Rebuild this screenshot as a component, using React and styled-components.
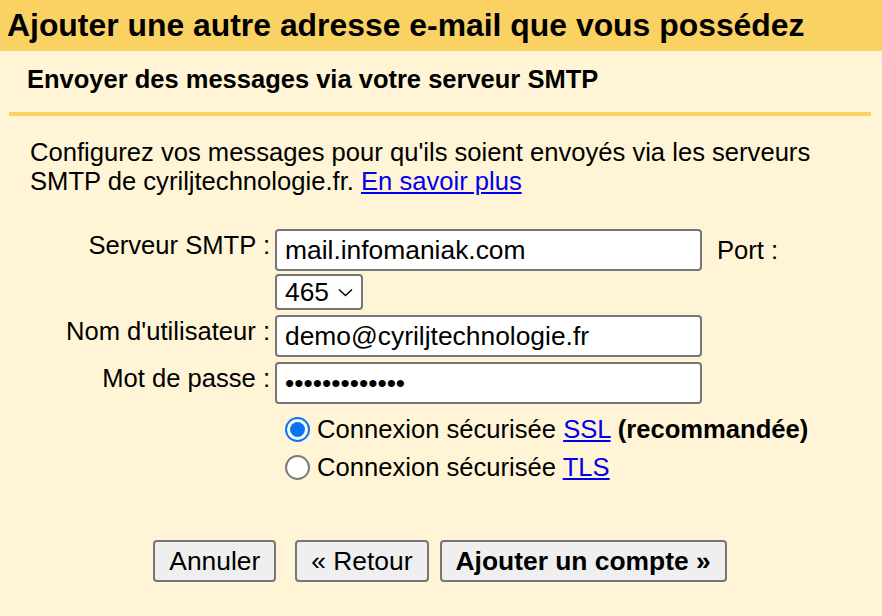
import React from 'react';
import styled, { createGlobalStyle } from 'styled-components';

const GlobalStyle = createGlobalStyle`
  html, body {
    margin: 0;
    padding: 0;
    background: #fff5d6;
  }
  body {
    font-family: "Liberation Sans", Arial, sans-serif;
    color: #000;
  }
`

const Page = styled.div`
  width: 882px;
  height: 616px;
  overflow: hidden;
  background: #fff5d6;
`

const Header = styled.h1`
  margin: 0;
  height: 51px;
  display: flex;
  align-items: center;
  padding-left: 7px;
  background: #fad163;
  font-size: 31.9px;
  font-weight: bold;
  white-space: nowrap;
`

const SubTitle = styled.h2`
  margin: 0;
  padding: 14px 0 0 27px;
  box-sizing: border-box;
  height: 61px;
  font-size: 25.5px;
  font-weight: bold;
  white-space: nowrap;
`

const Divider = styled.div`
  height: 4px;
  margin: 0 11px 0 9px;
  background: #fad163;
`

const Intro = styled.p`
  margin: 22px 0 0 30px;
  font-size: 25.6px;
  line-height: 29px;
`

const Link = styled.a`
  color: #0000ee;
  text-decoration: underline;
  cursor: pointer;
`

const FormGrid = styled.div`
  display: grid;
  grid-template-columns: 270px auto;
  column-gap: 5px;
  row-gap: 5px;
  margin-top: 33px;
`

const Label = styled.label`
  text-align: right;
  font-size: 25.6px;
  line-height: 29px;
  padding-top: 2px;
  white-space: nowrap;
`

const FieldCell = styled.div`
  display: flex;
  flex-direction: column;
  align-items: flex-start;
  gap: 3px;
`

const FieldRow = styled.div`
  display: flex;
  align-items: center;
  gap: 15px;
`

const TextInput = styled.input`
  box-sizing: border-box;
  width: 427px;
  height: 42px;
  padding: 0 8px;
  border: 2px solid #767676;
  border-radius: 4px;
  background: #fff;
  font-family: "Liberation Sans", Arial, sans-serif;
  font-size: 26.4px;
  color: #000;
  outline: none;
`

const PortLabel = styled.span`
  font-size: 25.6px;
`

const SelectBox = styled.div`
  box-sizing: border-box;
  width: 88px;
  height: 36px;
  display: flex;
  align-items: center;
  justify-content: space-between;
  padding: 0 8px;
  border: 2px solid #767676;
  border-radius: 4px;
  background: #fff;
  font-size: 26.4px;
`

const RadioGroup = styled.div`
  display: flex;
  flex-direction: column;
  gap: 9px;
  margin: 11px 0 0 285px;
`

const RadioRow = styled.label`
  display: flex;
  align-items: center;
  gap: 7px;
  font-size: 25.6px;
  line-height: 29px;
`

const RadioDot = styled.span`
  box-sizing: border-box;
  width: 25px;
  height: 25px;
  flex: none;
  border-radius: 50%;
  border: ${props => (props.checked ? '2px solid #0a74f5' : '2px solid #7b7b7b')};
  background: #fff;
  display: flex;
  align-items: center;
  justify-content: center;
  &::after {
    content: '';
    width: 15px;
    height: 15px;
    border-radius: 50%;
    background: ${props => (props.checked ? '#0a74f5' : 'transparent')};
  }
`

const Buttons = styled.div`
  display: flex;
  justify-content: center;
  margin-top: 58px;
  padding-right: 2px;
`

const Button = styled.button`
  box-sizing: border-box;
  height: 42px;
  padding: 0 14px;
  margin-right: ${props => props.gap || 0}px;
  border: 2px solid #767676;
  border-radius: 4px;
  background: #efefef;
  font-family: "Liberation Sans", Arial, sans-serif;
  font-size: 26.4px;
  font-weight: ${props => (props.primary ? 'bold' : 'normal')};
  color: #000;
  white-space: nowrap;
`

const Chevron = () => (
  <svg width="15" height="9" viewBox="0 0 15 9">
    <path d="M1 1.5 L7.5 7.5 L14 1.5" fill="none" stroke="#000" strokeWidth="1.4" />
  </svg>
)

export default function App() {
  return (
    <Page>
      <GlobalStyle />
      <Header>Ajouter une autre adresse e-mail que vous possédez</Header>
      <SubTitle>Envoyer des messages via votre serveur SMTP</SubTitle>
      <Divider />
      <Intro>
        Configurez vos messages pour qu'ils soient envoyés via les serveurs<br />
        SMTP de cyriljtechnologie.fr. <Link>En savoir plus</Link>
      </Intro>
      <FormGrid>
        <Label>Serveur SMTP :</Label>
        <FieldCell>
          <FieldRow>
            <TextInput type="text" defaultValue="mail.infomaniak.com" />
            <PortLabel>Port :</PortLabel>
          </FieldRow>
          <SelectBox>
            465 <Chevron />
          </SelectBox>
        </FieldCell>
        <Label>Nom d'utilisateur :</Label>
        <TextInput type="text" defaultValue="demo@cyriljtechnologie.fr" />
        <Label>Mot de passe :</Label>
        <TextInput type="password" defaultValue="aaaaaaaaaaaaa" />
      </FormGrid>
      <RadioGroup>
        <RadioRow>
          <RadioDot checked />
          <span>
            Connexion sécurisée <Link>SSL</Link> <b>(recommandée)</b>
          </span>
        </RadioRow>
        <RadioRow>
          <RadioDot />
          <span>
            Connexion sécurisée <Link>TLS</Link>
          </span>
        </RadioRow>
      </RadioGroup>
      <Buttons>
        <Button gap={19}>Annuler</Button>
        <Button gap={11}>« Retour</Button>
        <Button primary>Ajouter un compte »</Button>
      </Buttons>
    </Page>
  )
}
